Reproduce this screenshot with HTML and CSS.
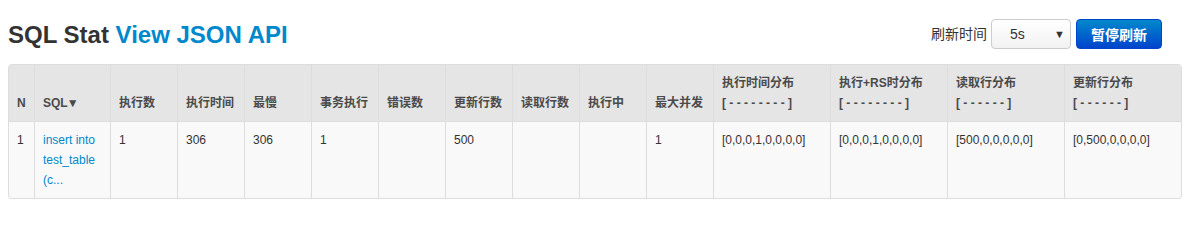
FILE: index.html
```html
<!DOCTYPE html>
<html>
<head>
<meta charset="utf-8">
<link rel="stylesheet" href="styles.css">
</head>
<body>
<div class="page">
  <div class="topbar">
    <h2 class="title">SQL Stat <a class="link" href="#">View JSON API</a></h2>
    <div class="controls">
      <span class="label">刷新时间</span>
      <div class="select"><span>5s</span><span class="caret">▼</span></div>
      <button class="btn">暂停刷新</button>
    </div>
  </div>
  <table class="grid">
    <thead>
      <tr>
        <th class="c-n">N</th>
        <th class="c-sql">SQL<span class="sort">▼</span></th>
        <th class="c-s">执行数</th>
        <th class="c-s">执行时间</th>
        <th class="c-s">最慢</th>
        <th class="c-s">事务执行</th>
        <th class="c-s">错误数</th>
        <th class="c-s">更新行数</th>
        <th class="c-s">读取行数</th>
        <th class="c-s">执行中</th>
        <th class="c-s">最大并发</th>
        <th class="c-w">执行时间分布<br>[ - - - - - - - - ]</th>
        <th class="c-w">执行+RS时分布<br>[ - - - - - - - - ]</th>
        <th class="c-w">读取行分布<br>[ - - - - - - ]</th>
        <th class="c-w">更新行分布<br>[ - - - - - - ]</th>
      </tr>
    </thead>
    <tbody>
      <tr>
        <td>1</td>
        <td><a class="link" href="#">insert into test_table (c...</a></td>
        <td>1</td>
        <td>306</td>
        <td>306</td>
        <td>1</td>
        <td></td>
        <td>500</td>
        <td></td>
        <td></td>
        <td>1</td>
        <td>[0,0,0,1,0,0,0,0]</td>
        <td>[0,0,0,1,0,0,0,0]</td>
        <td>[500,0,0,0,0,0]</td>
        <td>[0,500,0,0,0,0]</td>
      </tr>
    </tbody>
  </table>
</div>
</body>
</html>
```

FILE: styles.css
```css
html, body {
  margin: 0;
  padding: 0;
  background: #ffffff;
}
body {
  font-family: "Liberation Sans", "Noto Sans CJK SC", sans-serif;
  font-size: 12px;
  line-height: 20px;
  color: #333333;
}
.page {
  padding: 0 8px;
}
.topbar {
  display: flex;
  align-items: center;
  justify-content: space-between;
  height: 30px;
  margin-top: 19px;
  margin-bottom: 15px;
  padding-right: 28px;
}
.title {
  margin: 0;
  font-size: 24px;
  line-height: 30px;
  font-weight: bold;
  color: #333333;
  position: relative;
  top: 1px;
}
.link {
  color: #0088cc;
  text-decoration: none;
}
.controls {
  display: flex;
  align-items: center;
}
.label {
  font-size: 14px;
  color: #333333;
  margin-right: 4px;
}
.select {
  box-sizing: border-box;
  width: 80px;
  height: 30px;
  border: 1px solid #cccccc;
  border-radius: 4px;
  background: linear-gradient(#ffffff, #f2f2f2);
  display: flex;
  align-items: center;
  justify-content: space-between;
  padding: 0 5px 0 18px;
  font-size: 14px;
  color: #333333;
}
.caret {
  font-size: 11px;
  color: #333333;
}
.btn {
  box-sizing: border-box;
  margin-left: 5px;
  width: 86px;
  height: 30px;
  border: 1px solid #0044cc;
  border-radius: 4px;
  background: linear-gradient(#0088cc, #0044cc);
  color: #ffffff;
  font-family: "Liberation Sans", "Noto Sans CJK SC", sans-serif;
  font-size: 14px;
  font-weight: bold;
  padding: 0;
}
.grid {
  table-layout: fixed;
  width: 1174px;
  border-collapse: separate;
  border-spacing: 0;
  border: 1px solid #dddddd;
  border-left: 0;
  border-radius: 4px;
}
.grid th, .grid td {
  box-sizing: border-box;
  border-left: 1px solid #dddddd;
  padding: 8px;
  text-align: left;
  line-height: 20px;
}
.grid th {
  background: #e5e5e5;
  color: #4a4a4a;
  font-weight: bold;
  vertical-align: bottom;
  white-space: nowrap;
}
.grid td {
  background: #f9f9f9;
  border-top: 1px solid #dddddd;
  vertical-align: top;
}
.grid thead tr th:first-child {
  border-top-left-radius: 4px;
}
.grid thead tr th:last-child {
  border-top-right-radius: 4px;
}
.grid tbody tr td:first-child {
  border-bottom-left-radius: 4px;
}
.grid tbody tr td:last-child {
  border-bottom-right-radius: 4px;
}
.c-n { width: 26px; }
.c-sql { width: 76px; }
.c-s { width: 67px; }
.c-w { width: 117px; }
.sort {
  font-size: 12px;
  margin-left: -1px;
}
```
